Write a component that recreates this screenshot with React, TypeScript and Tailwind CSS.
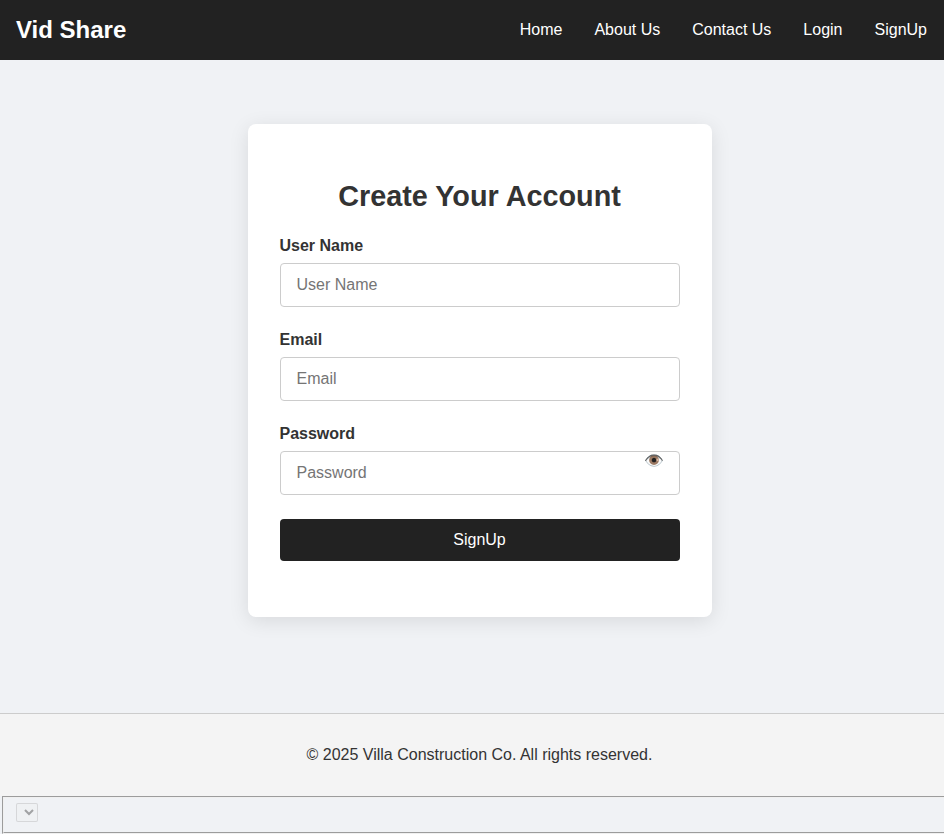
import React from "react";

const links = ["Home", "About Us", "Contact Us", "Login", "SignUp"];

function Field({ label, type = "text", children }: { label: string; type?: string; children?: React.ReactNode }) {
  return (
    <div className="mb-6">
      <label className="mb-2 block text-base leading-[18px] font-bold">{label}</label>
      <div className="relative">
        <input
          type={type}
          placeholder={label}
          className="block h-11 w-full rounded border border-[#ccc] bg-white px-4 text-base placeholder:text-[#757575]"
        />
        {children}
      </div>
    </div>
  );
}

function Eye() {
  return <span className="absolute top-px right-4 text-base leading-[18px]">👁️</span>;
}

export default function App() {
  return (
    <div className="flex h-[834px] w-full flex-col overflow-hidden bg-[#f0f2f5] font-['Liberation_Sans',Arial,sans-serif] text-[#333]">
      <header className="flex h-[60px] shrink-0 items-center justify-between bg-[#222] px-4 text-white">
        <div className="text-2xl font-bold">Vid Share</div>
        <nav className="flex gap-8 pr-px text-base">
          {links.map((link) => <a key={link} href="#">{link}</a>)}
        </nav>
      </header>
      <main className="flex h-[653px] shrink-0 flex-col items-center pt-16 pl-[15px]">
        <form className="h-[493px] w-[464px] rounded-lg bg-white px-8 pt-14 shadow-[0_4px_20px_rgba(0,0,0,0.1)]">
          <h1 className="mb-[25px] text-center text-[28.8px] leading-8 font-bold">Create Your Account</h1>
          <Field label="User Name" />
          <Field label="Email" />
          <Field label="Password" type="password"><Eye /></Field>
          <button type="button" className="h-[42px] w-full rounded bg-[#222] text-base text-white">SignUp</button>
        </form>
      </main>
      <footer className="h-[83px] shrink-0 border-t border-[#ccc] bg-[#f4f4f4] pt-[29px] pl-[15px] text-center">
        © 2025 Villa Construction Co. All rights reserved.
      </footer>
      <fieldset className="ml-0.5 flex h-[38px] shrink-0 items-start border-2 border-r-0 [border-style:groove] border-[#f0f0f0] pt-[5px] pl-3">
        <select disabled className="h-[19px] w-[22px] rounded-[2px] border border-[#767676]/30 bg-[#efefef]/30 text-[13.333px] text-[#101010]/50 opacity-70" />
      </fieldset>
    </div>
  );
}
